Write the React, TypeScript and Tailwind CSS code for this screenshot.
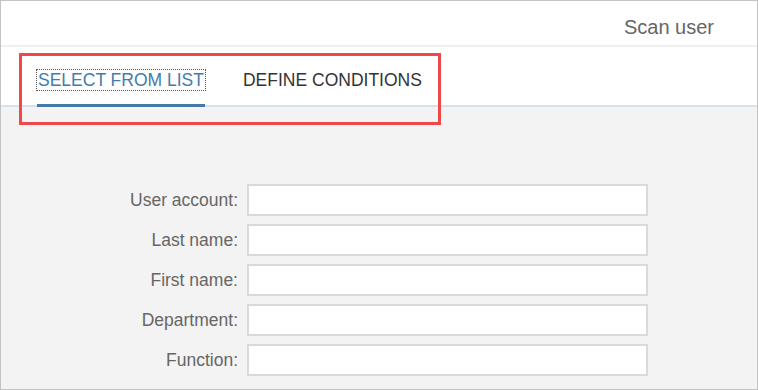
import { useState } from "react"

const fields = ["User account:", "Last name:", "First name:", "Department:", "Function:"]

export default function App() {
  const [tab, setTab] = useState<"list" | "conditions">("list")

  return (
    <div
      className="relative w-[758px] h-[390px] border border-[#c3c3c3] bg-white flex flex-col overflow-hidden"
      style={{ fontFamily: '"Liberation Sans", Arial, sans-serif' }}
    >
      <header className="h-[46px] shrink-0 flex items-center justify-end pr-[43px] border-b-2 border-[#f0f0f0]">
        <span className="text-[20px] text-[#666666] pt-[7px]">Scan user</span>
      </header>

      <nav className="h-[60px] shrink-0 flex items-stretch pl-[36px] gap-[38px] border-b-2 border-[#d6e3ef]">
        <button
          onClick={() => setTab("list")}
          className={`relative flex items-center pt-[7px] text-[17.5px] ${
            tab === "list" ? "text-[#427cac]" : "text-[#333333]"
          }`}
        >
          <span className={tab === "list" ? "outline outline-1 outline-dotted outline-[#555] px-[1px] leading-[20px]" : "leading-[20px]"}>
            SELECT FROM LIST
          </span>
          {tab === "list" && (
            <span className="absolute left-0 right-0 -bottom-[2px] h-[3px] bg-[#4479aa]" />
          )}
        </button>
        <button
          onClick={() => setTab("conditions")}
          className={`relative flex items-center pt-[7px] text-[17.5px] ${
            tab === "conditions" ? "text-[#427cac]" : "text-[#333333]"
          }`}
        >
          <span className="leading-[20px]">DEFINE CONDITIONS</span>
          {tab === "conditions" && (
            <span className="absolute left-0 right-0 -bottom-[2px] h-[3px] bg-[#4479aa]" />
          )}
        </button>
      </nav>

      <main className="flex-1 bg-[#f3f3f3] pt-[77px] flex flex-col gap-[8px]">
        {fields.map((label) => (
          <div key={label} className="flex items-center">
            <label className="w-[237px] text-right text-[17.5px] text-[#666666]">
              {label}
            </label>
            <input
              type="text"
              className="ml-[9px] w-[401px] h-[32px] bg-white border-2 border-[#dadada] outline-none"
            />
          </div>
        ))}
      </main>

      {/* annotation box */}
      <div className="absolute left-[18px] top-[52px] w-[422px] h-[72px] border-[3px] border-[#f04848] pointer-events-none" />
    </div>
  )
}
